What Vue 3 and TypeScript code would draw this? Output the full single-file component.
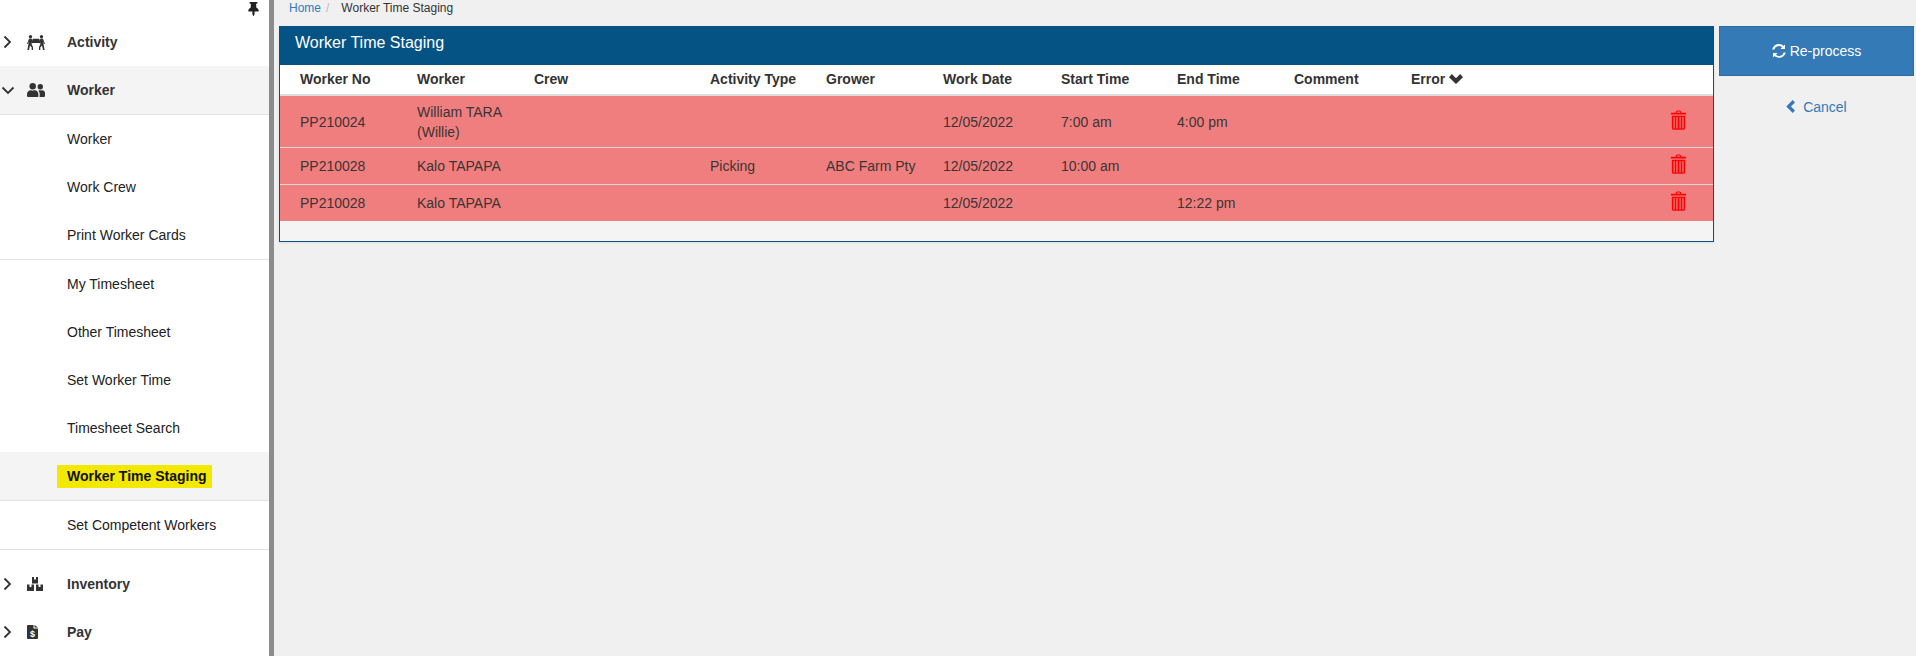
<script setup lang="ts">
interface Row { no: string; worker: string[]; activity?: string; grower?: string; start?: string; end?: string }
const columns = ['Worker No', 'Worker', 'Crew', 'Activity Type', 'Grower', 'Work Date', 'Start Time', 'End Time', 'Comment']
const rows: Row[] = [
  { no: 'PP210024', worker: ['William TARA', '(Willie)'], start: '7:00 am', end: '4:00 pm' },
  { no: 'PP210028', worker: ['Kalo TAPAPA'], activity: 'Picking', grower: 'ABC Farm Pty', start: '10:00 am' },
  { no: 'PP210028', worker: ['Kalo TAPAPA'], end: '12:22 pm' },
]
</script>

<template>
  <div class="page">
    <aside class="sidebar">
      <div class="pin">
        <svg width="11" height="14" viewBox="0 0 384 512"><path d="M298 214 285 64h35c9 0 16-7 16-16V16c0-9-7-16-16-16H64c-9 0-16 7-16 16v32c0 9 7 16 16 16h35L86 214C38 236 0 277 0 328c0 9 7 16 16 16h136v104l32 64c3 6 12 6 15 0l33-64V344h136c9 0 16-7 16-16 0-52-39-92-86-114z" /></svg>
      </div>
      <div class="group">
        <svg class="caret" width="9" height="14" viewBox="0 0 9 14"><path d="M1.500 1.500 7 7l-5.500 5.500" /></svg>
        <svg class="gicon" width="18" height="15" viewBox="0 0 18 15"><circle cx="3.500" cy="1.700" r="1.700" /><circle cx="14.500" cy="1.700" r="1.700" /><rect x="5.500" y="3.800" width="7" height="4.200" rx=".6" /><path d="M2 3.800h2.500L6 6v2.400L4.700 7.600v2L6 12v3H4.700v-2.500L3 10.500 2 15H.4l1.200-7V6.500L1 9H0z" /><path d="M16 3.800h-2.500L12 6v2.400l1.300-.8v2L12 12v3h1.300v-2.500l1.700-2 1 4.500h1.600l-1.200-7V6.500L17 9h1z" /></svg>
        <span>Activity</span>
      </div>
      <div class="group open">
        <svg class="caret down" width="14" height="9" viewBox="0 0 14 9"><path d="M1.500 1.500 7 7l5.500-5.500" /></svg>
        <svg class="gicon" width="18" height="14" viewBox="0 0 18 14"><circle cx="5.700" cy="3.300" r="3.200" /><circle cx="13.300" cy="3.800" r="2.700" /><path d="M0 11.500C0 8.500 2 7.300 3.700 7.300c.9 0 1.200.4 2 .4s1.100-.4 2-.4c1.800 0 3.700 1.200 3.700 4.200V13a1 1 0 0 1-1 1H1a1 1 0 0 1-1-1z" /><path d="M12.400 14c.2-.3.300-.7.300-1v-1.800c0-1.500-.5-2.700-1.300-3.500.5-.3 1-.4 1.400-.4.400 0 .7.200 1.200.2s.8-.2 1.200-.2c1.500 0 2.800 1.200 2.800 3V13a1 1 0 0 1-1 1z" /></svg>
        <span>Worker</span>
      </div>
      <a class="item">Worker</a>
      <a class="item">Work Crew</a>
      <a class="item sep">Print Worker Cards</a>
      <a class="item">My Timesheet</a>
      <a class="item">Other Timesheet</a>
      <a class="item">Set Worker Time</a>
      <a class="item">Timesheet Search</a>
      <a class="item current"><mark>Worker Time Staging</mark></a>
      <a class="item sep">Set Competent Workers</a>
      <div class="group inv">
        <svg class="caret" width="9" height="14" viewBox="0 0 9 14"><path d="M1.500 1.500 7 7l-5.500 5.500" /></svg>
        <svg class="gicon" width="16" height="14" viewBox="0 0 16 14"><path d="M5 0h2v2.500h2V0h2v6.500H5z" /><path d="M0 7.500h2.500V10h2V7.500H7V14H0z" /><path d="M9 7.500h2.500V10h2V7.500H16V14H9z" /></svg>
        <span>Inventory</span>
      </div>
      <div class="group">
        <svg class="caret" width="9" height="14" viewBox="0 0 9 14"><path d="M1.500 1.500 7 7l-5.500 5.500" /></svg>
        <svg class="gicon" width="11" height="14" viewBox="0 0 11 14"><path d="M0 1a1 1 0 0 1 1-1h5.500v3.500H11V13a1 1 0 0 1-1 1H1a1 1 0 0 1-1-1zM7.500 0 11 2.500H7.500z" /><text x="5.500" y="12" text-anchor="middle" class="dollar">$</text></svg>
        <span>Pay</span>
      </div>
    </aside>

    <main class="main">
      <nav class="crumbs"><a>Home</a><i>/</i><span>Worker Time Staging</span></nav>
      <div class="content">
        <section class="panel">
          <h2 class="title">Worker Time Staging</h2>
          <div class="grid head">
            <div v-for="c in columns" :key="c">{{ c }}</div>
            <div class="err">Error
              <svg width="14" height="10" viewBox="0 0 14 10"><path d="M0 3.200 2.800 0 7 4.200 11.200 0 14 3.200 7 10z" /></svg>
            </div>
            <div></div>
          </div>
          <div v-for="(r, i) in rows" :key="i" class="grid row" :class="{ tall: r.worker.length > 1 }">
            <div>{{ r.no }}</div>
            <div><template v-for="(l, j) in r.worker" :key="j">{{ l }}<br v-if="j < r.worker.length - 1" /></template></div>
            <div></div>
            <div>{{ r.activity }}</div>
            <div>{{ r.grower }}</div>
            <div>12/05/2022</div>
            <div>{{ r.start }}</div>
            <div>{{ r.end }}</div>
            <div></div>
            <div></div>
            <div class="trash">
              <svg width="17" height="20" viewBox="0 0 16 21"><path class="t-fill" d="M5 2.500C5 1 6 .5 8 .5s3 .5 3 2V3h5v1.600H0V3h5zM6.300 3h3.400v-.6c0-.5-.6-.7-1.700-.7s-1.700.2-1.700.7z" /><path class="t-fill" fill-rule="evenodd" d="M1 6h14v13.200c0 .9-.6 1.500-1.500 1.500h-11c-.9 0-1.500-.6-1.500-1.500zM2.700 7.400v11.900h1.300V7.400zm3 0v11.900H7V7.400zm3.300 0v11.900h1.300V7.400zm3 0v11.900h1.300V7.400z" /></svg>
            </div>
          </div>
          <div class="panel-foot"></div>
        </section>
        <aside class="actions">
          <button class="reprocess" type="button">
            <svg width="14" height="14" viewBox="0 0 14 14"><path d="M7 0c1.800 0 3.400.7 4.500 1.900L13 .4V5H8.400l1.700-1.700A4.800 4.800 0 0 0 2.300 5.600H.2A7 7 0 0 1 7 0zM1 9h4.600l-1.700 1.700a4.800 4.800 0 0 0 7.800-2.300h2.100A7 7 0 0 1 2.500 12.100L1 13.600z" /></svg>
            Re-process
          </button>
          <a class="cancel">
            <svg width="10" height="13" viewBox="0 0 10 13"><path d="M9 2.400 6.700 0 .3 6.500 6.700 13 9 10.600 4.900 6.500z" /></svg>
            Cancel
          </a>
        </aside>
      </div>
    </main>
  </div>
</template>

<style>
html, body { margin: 0; background: #f0f0f0; }
</style>

<style scoped>
.page {
  display: flex;
  width: 1916px;
  height: 656px;
  overflow: hidden;
  font-family: "Liberation Sans", Arial, sans-serif;
  font-size: 14px;
  color: #333;
}
.sidebar {
  width: 269px;
  flex: none;
  background: #fff;
  border-right: 5px solid #8c8c8c;
}
.pin { height: 18px; padding-right: 10px; display: flex; justify-content: flex-end; }
.pin svg { fill: #222; margin-top: 2px; }
.group {
  height: 48px;
  display: flex;
  align-items: center;
  position: relative;
  padding-left: 67px;
  font-weight: 700;
  color: #333;
}
.group.open { background: #f4f4f4; border-bottom: 1px solid #e2e2e2; }
.group.inv { margin-top: 10px; }
.caret { position: absolute; left: 3px; fill: none; stroke: #333; stroke-width: 1.800; }
.caret.down { left: 1px; }
.gicon { position: absolute; left: 27px; fill: #333; }
.dollar { font: 700 9px "Liberation Sans", sans-serif; fill: #fff; }
.item {
  height: 48px;
  display: flex;
  align-items: center;
  padding-left: 67px;
  color: #222;
  font-size: 14px;
}
.item.sep { border-bottom: 1px solid #e2e2e2; height: 49px; box-sizing: border-box; }
.item.current { background: #f4f4f4; font-weight: 700; color: #111; border-bottom: 1px solid #e2e2e2; box-sizing: border-box; height: 49px; }
.item.current mark { background: #f2e800; color: inherit; padding: 3px 5px 3px 10px; margin-left: -10px; line-height: 17px; }

.main { flex: 1; min-width: 0; background: #f0f0f0; padding: 0 2px 0 5px; }
.crumbs { height: 26px; padding-left: 10px; line-height: 17px; font-size: 12px; color: #333; display: flex; }
.crumbs a { color: #337ab7; }
.crumbs i { font-style: normal; color: #bbb; padding: 0 12px 0 5px; }
.content { display: flex; gap: 5px; align-items: flex-start; }
.panel {
  width: 1435px;
  box-sizing: border-box;
  border: 1px solid #055384;
  border-top: 0;
  background: #f4f4f4;
  box-shadow: 0 1px 2px rgba(0,0,0,.08);
}
.title {
  margin: 0 -1px;
  height: 39px;
  background: #055384;
  color: #fff;
  font-size: 16px;
  font-weight: 400;
  line-height: 33px;
  padding-left: 16px;
}
.grid {
  display: grid;
  grid-template-columns: 117px 117px 176px 116px 117px 118px 116px 117px 117px 234px 66px;
  padding-left: 20px;
  align-items: center;
}
.head {
  height: 31px;
  box-sizing: border-box;
  background: #fff;
  border-bottom: 2px solid #ddd;
  font-weight: 700;
  color: #333;
  padding-bottom: 2px;
}
.err svg { fill: #333; }
.row {
  background: #f17e7e;
  color: #3a3434;
  height: 36px;
  border-bottom: 1px solid #e6d5d5;
  line-height: 20px;
}
.row.tall { height: 51px; }
.row:has(+ .panel-foot) { border-bottom: 0; }
.trash { display: flex; justify-content: center; margin-top: -4px; }
.t-fill { fill: #f00; }
.panel-foot { height: 20px; }
.actions { width: 195px; flex: none; display: flex; flex-direction: column; align-items: center; }
.reprocess {
  width: 100%;
  height: 50px;
  background: #337ab7;
  border: 1px solid #2e6da4;
  color: #fff;
  font: 14px "Liberation Sans", Arial, sans-serif;
  padding: 0;
}
.reprocess svg { fill: #fff; vertical-align: -2px; }
.cancel { margin-top: 21px; color: #337ab7; font-size: 14px; line-height: 20px; }
.cancel svg { fill: #337ab7; vertical-align: -1px; margin-right: 3px; }
</style>
